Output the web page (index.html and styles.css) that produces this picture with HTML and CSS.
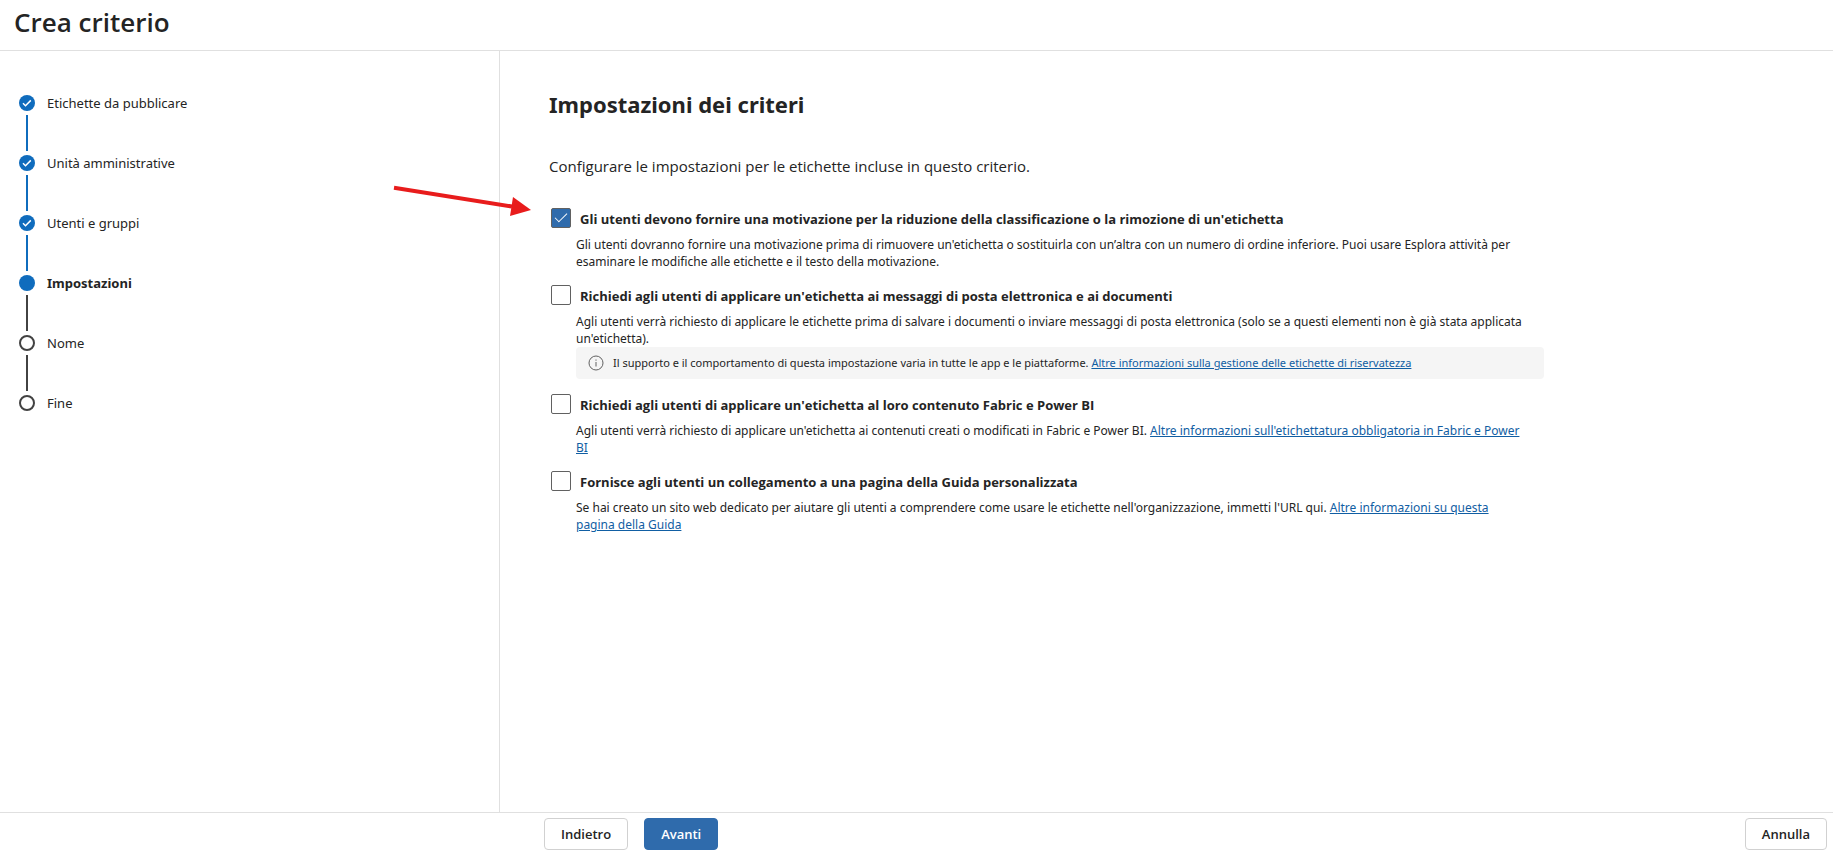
FILE: index.html
```html
<!DOCTYPE html>
<html lang="it">
<head>
	<meta charset="utf-8">
	<meta name="viewport" content="width=device-width, initial-scale=1">
	<title>Crea criterio</title>
	<link rel="stylesheet" href="styles.css">
</head>
<body>
	<header class="header">
		<h1>Crea criterio</h1>
	</header>

	<div class="wizard">
		<nav class="sidebar">
			<ol class="steps">
				<li class="step done">
					<svg class="dot" viewBox="0 0 16 16"><circle cx="8" cy="8" r="8"/><path d="M4 8.300l2.500 2.400 5.300-5.300"/></svg>
					<span>Etichette da pubblicare</span>
				</li>
				<li class="step done">
					<svg class="dot" viewBox="0 0 16 16"><circle cx="8" cy="8" r="8"/><path d="M4 8.300l2.500 2.400 5.300-5.300"/></svg>
					<span>Unità amministrative</span>
				</li>
				<li class="step done">
					<svg class="dot" viewBox="0 0 16 16"><circle cx="8" cy="8" r="8"/><path d="M4 8.300l2.500 2.400 5.300-5.300"/></svg>
					<span>Utenti e gruppi</span>
				</li>
				<li class="step current" aria-current="step">
					<svg class="dot" viewBox="0 0 16 16"><circle cx="8" cy="8" r="8"/></svg>
					<span>Impostazioni</span>
				</li>
				<li class="step">
					<svg class="dot" viewBox="0 0 16 16"><circle cx="8" cy="8" r="7"/></svg>
					<span>Nome</span>
				</li>
				<li class="step">
					<svg class="dot" viewBox="0 0 16 16"><circle cx="8" cy="8" r="7"/></svg>
					<span>Fine</span>
				</li>
			</ol>
		</nav>

		<main class="content">
			<h2>Impostazioni dei criteri</h2>
			<p class="intro">Configurare le impostazioni per le etichette incluse in questo criterio.</p>

			<div class="option">
				<div class="option-head">
					<input type="checkbox" id="opt1" checked>
					<label for="opt1">Gli utenti devono fornire una motivazione per la riduzione della classificazione o la rimozione di un'etichetta</label>
				</div>
				<p class="desc">Gli utenti dovranno fornire una motivazione prima di rimuovere un'etichetta o sostituirla con un’altra con un numero di ordine inferiore. Puoi usare Esplora attività per esaminare le modifiche alle etichette e il testo della motivazione.</p>
			</div>

			<div class="option">
				<div class="option-head">
					<input type="checkbox" id="opt2">
					<label for="opt2">Richiedi agli utenti di applicare un'etichetta ai messaggi di posta elettronica e ai documenti</label>
				</div>
				<p class="desc">Agli utenti verrà richiesto di applicare le etichette prima di salvare i documenti o inviare messaggi di posta elettronica (solo se a questi elementi non è già stata applicata un'etichetta).</p>
				<div class="info">
					<svg class="info-icon" viewBox="0 0 16 16"><circle cx="8" cy="8" r="7"/><path d="M8 7v4.500M8 4.500v1.200"/></svg>
					<p>Il supporto e il comportamento di questa impostazione varia in tutte le app e le piattaforme. <a href="#">Altre informazioni sulla gestione delle etichette di riservatezza</a></p>
				</div>
			</div>

			<div class="option">
				<div class="option-head">
					<input type="checkbox" id="opt3">
					<label for="opt3">Richiedi agli utenti di applicare un'etichetta al loro contenuto Fabric e Power BI</label>
				</div>
				<p class="desc">Agli utenti verrà richiesto di applicare un'etichetta ai contenuti creati o modificati in Fabric e Power BI. <a href="#">Altre informazioni sull'etichettatura obbligatoria in Fabric e Power BI</a></p>
			</div>

			<div class="option">
				<div class="option-head">
					<input type="checkbox" id="opt4">
					<label for="opt4">Fornisce agli utenti un collegamento a una pagina della Guida personalizzata</label>
				</div>
				<p class="desc">Se hai creato un sito web dedicato per aiutare gli utenti a comprendere come usare le etichette nell'organizzazione, immetti l'URL qui. <a href="#">Altre informazioni su questa pagina della Guida</a></p>
			</div>
		</main>

		<svg class="arrow" viewBox="0 0 140 32"><path class="shaft" d="M4 5.800L122 24.500"/><path class="head" d="M123 15L141 28 120 34z"/></svg>
	</div>

	<footer class="footer">
		<button type="button" class="btn">Indietro</button>
		<button type="button" class="btn btn-primary">Avanti</button>
		<button type="button" class="btn btn-cancel">Annulla</button>
	</footer>
</body>
</html>
```

FILE: styles.css
```css
*{
	margin: 0;
	padding: 0;
	box-sizing: border-box;
}
body{
	display: flex;
	flex-direction: column;
	min-height: 100vh;
	font: 13px/20px "Segoe UI", "Noto Sans", "Open Sans", sans-serif;
	color: #242424;
	background: #fff;
}
a{
	color: #115ea3;
	text-decoration: underline;
}
.header{
	padding: 6px 14px 12px;
	border-bottom: 1px solid #e0e0e0;
}
.header h1{
	font-family: "Segoe UI", "Open Sans", sans-serif;
	font-size: 26px;
	line-height: 32px;
	font-weight: 600;
}
.wizard{
	position: relative;
	display: flex;
	flex: 1;
}

/* steps */
.sidebar{
	flex: 0 0 500px;
	padding: 42px 19px;
	border-right: 1px solid #e0e0e0;
}
.steps{
	list-style: none;
}
.step{
	position: relative;
	display: flex;
	align-items: center;
	gap: 12px;
	height: 20px;
	margin-bottom: 40px;
}
.step:not(:last-child)::after{
	content: "";
	position: absolute;
	left: 7px;
	top: 22px;
	width: 2px;
	height: 36px;
	background: #424242;
}
.step.done::after{
	background: #0f6cbd;
}
.step.current{
	font-weight: 700;
}
.dot{
	width: 16px;
	height: 16px;
	fill: none;
	stroke: #424242;
	stroke-width: 2;
}
.done .dot circle,
.current .dot circle{
	fill: #0f6cbd;
	stroke: none;
}
.done .dot path{
	stroke: #fff;
	stroke-width: 1.5;
}

/* settings */
.content{
	flex: 1;
	max-width: 1044px;
	padding: 37px 0 40px 49px;
}
.content h2{
	font-size: 22px;
	line-height: 32px;
	font-weight: 700;
}
.intro{
	margin: 35px 0 31px;
	font-family: "Segoe UI", "Open Sans", sans-serif;
	font-size: 15px;
	line-height: 22px;
}
.option{
	margin-bottom: 15px;
}
.option-head{
	display: flex;
	gap: 9px;
	height: 28px;
	padding-left: 2px;
}
.option-head input{
	flex: none;
	appearance: none;
	width: 20px;
	height: 20px;
	border: 1px solid #616161;
	border-radius: 2px;
	background: #fff;
}
.option-head input:checked{
	display: grid;
	place-items: center;
	background: #2f6bac;
}
.option-head input:checked::before{
	content: "";
	width: 11px;
	height: 5px;
	border: solid #fff;
	border-width: 0 0 1px 1px;
	transform: translateY(-2px) rotate(-45deg);
}
.option-head label{
	font-family: "Segoe UI", "Open Sans", sans-serif;
	font-weight: 700;
	line-height: 22px;
}
.desc{
	padding: 0 18px 0 27px;
	font-size: 12px;
	line-height: 17px;
}
.info{
	display: flex;
	align-items: center;
	gap: 9px;
	min-height: 32px;
	margin-left: 27px;
	padding: 0 12px;
	border-radius: 4px;
	background: #f5f5f5;
	font-size: 11px;
	line-height: 16px;
}
.info-icon{
	flex: none;
	width: 16px;
	height: 16px;
	fill: none;
	stroke: #616161;
	stroke-width: 1;
}

/* callout */
.arrow{
	position: absolute;
	left: 390px;
	top: 131px;
	width: 140px;
	height: 32px;
	overflow: visible;
}
.arrow .shaft{
	stroke: #e81c1c;
	stroke-width: 4;
}
.arrow .head{
	fill: #e81c1c;
}

.footer{
	display: flex;
	gap: 16px;
	padding: 5px 6px 3px 544px;
	border-top: 1px solid #e0e0e0;
}
.btn{
	height: 32px;
	padding: 0 16px;
	border: 1px solid #d1d1d1;
	border-radius: 4px;
	background: #fff;
	color: #242424;
	font: 600 13px/20px "Segoe UI", "Open Sans", sans-serif;
}
.btn-primary{
	border-color: #2f6bac;
	background: #2f6bac;
	color: #fff;
}
.btn-cancel{
	margin-left: auto;
}
```
